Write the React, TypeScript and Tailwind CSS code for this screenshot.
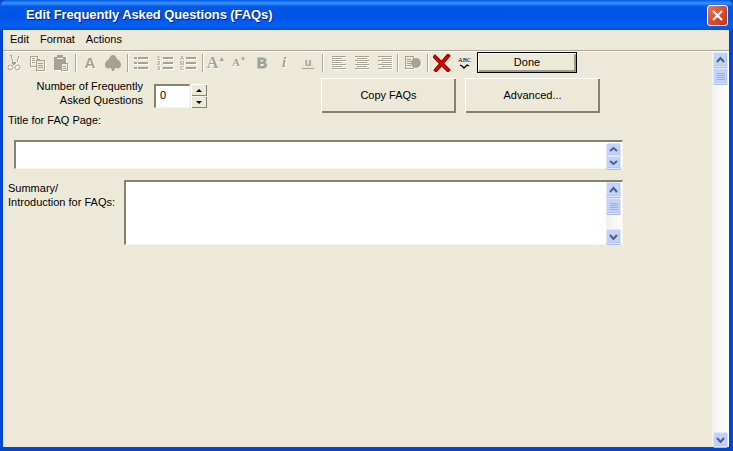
import type { ReactNode } from 'react';

const GREY = '#a5a294';

function Tool({ w, children }: { w: number; children: ReactNode }) {
  return (
    <div className="flex h-[20px] shrink-0 items-center justify-center" style={{ width: w }}>
      {children}
    </div>
  );
}

function Sep({ w = 8 }: { w?: number }) {
  return (
    <div className="flex h-[20px] shrink-0 justify-center" style={{ width: w }}>
      <div className="mt-px h-[18px] w-[2px] bg-[#aca899] border-r border-white" />
    </div>
  );
}

function Ico({ children, w = 16, h = 16 }: { children: ReactNode; w?: number; h?: number }) {
  return (
    <svg
      width={w}
      height={h}
      viewBox={`0 0 ${w} ${h}`}
      shapeRendering="crispEdges"
      className="[filter:drop-shadow(1px_1px_0_#ffffff)]"
      aria-hidden
    >
      {children}
    </svg>
  );
}

function Lines({ rows, x = 1, w = 13 }: { rows: number[]; x?: number; w?: number }) {
  return (
    <>
      {rows.map((y) => (
        <rect key={y} x={x} y={y} width={w} height={1} fill={GREY} />
      ))}
    </>
  );
}

function BulletList({ kind }: { kind: 'dot' | 'num' | 'alpha' }) {
  const labels = kind === 'num' ? ['1', '2', '3'] : ['A', 'B', 'C'];
  return (
    <Ico w={16} h={16}>
      {[2, 7, 12].map((y, i) =>
        kind === 'dot' ? (
          <g key={y}>
            <rect x={1} y={y} width={3} height={2} fill={GREY} />
            <rect x={5} y={y} width={10} height={2} fill={GREY} />
          </g>
        ) : (
          <g key={y}>
            <text x={0} y={y + 3} fontSize={6} fill={GREY} fontFamily="'Liberation Sans', sans-serif" fontWeight={700}>
              {labels[i]}
            </text>
            <rect x={6} y={y} width={10} height={2} fill={GREY} />
          </g>
        ),
      )}
    </Ico>
  );
}

function Glyph({ children, size, className }: { children: ReactNode; size: number; className?: string }) {
  return (
    <span
      className={`font-['Liberation_Serif',serif] font-bold leading-none text-[#a5a294] [text-shadow:1px_1px_0_#fff] ${className ?? ''}`}
      style={{ fontSize: size }}
    >
      {children}
    </span>
  );
}

function Toolbar() {
  return (
    <div className="flex items-center">
      <Tool w={22}>
        <Ico>
          <path d="M4 0v1h1v3h1v3h1v-3H6V0zM12 0v4h-1v3h1V4h1V1h-1V0z" fill={GREY} />
          <path d="M6 7h4v2H9v1H7V9H6z" fill={GREY} />
          <circle cx="4.5" cy="12.5" r="2.5" fill="none" stroke={GREY} shapeRendering="auto" />
          <circle cx="11.5" cy="12.5" r="2.5" fill="none" stroke={GREY} shapeRendering="auto" />
        </Ico>
      </Tool>
      <Tool w={24}>
        <Ico>
          <path d="M1 1h7v3h2v1H7v6H1z" fill="none" stroke={GREY} />
          <path d="M7 5h8v10H7z" fill="#ece9d8" stroke={GREY} />
          <Lines rows={[8, 10, 12]} x={9} w={5} />
          <Lines rows={[3, 5, 7]} x={3} w={3} />
        </Ico>
      </Tool>
      <Tool w={22}>
        <Ico>
          <path d="M2 2h3V0h6v2h3v10h-5v3H2z" fill={GREY} />
          <rect x={5} y={3} width={6} height={1} fill="#fff" />
          <path d="M9 8h6v7H9z" fill="#ece9d8" stroke={GREY} />
          <Lines rows={[11, 13]} x={11} w={3} />
        </Ico>
      </Tool>
      <Sep w={10} />
      <Tool w={18}>
        <span className="text-[15px] font-bold leading-none text-[#a5a294] [text-shadow:1px_1px_0_#fff]">A</span>
      </Tool>
      <Tool w={28}>
        <svg width="18" height="18" viewBox="0 0 18 18" aria-hidden>
          <path d="M9 1c2 0 3 2 4 4 2 1 4 3 4 6 0 3-3 4-5 3l-1 0-1 3H8l-1-3-1 0c-2 1-5 0-5-3 0-3 2-5 4-6 1-2 2-4 4-4z" fill={GREY} />
        </svg>
      </Tool>
      <Sep w={2} />
      <Tool w={24}><BulletList kind="dot" /></Tool>
      <Tool w={23}><BulletList kind="num" /></Tool>
      <Tool w={23}><BulletList kind="alpha" /></Tool>
      <Sep w={8} />
      <Tool w={18}>
        <Glyph size={16}>A</Glyph>
        <span className="-mt-2 text-[7px] leading-none text-[#a5a294]">▲</span>
      </Tool>
      <Tool w={28}>
        <Glyph size={11}>A</Glyph>
        <span className="-mt-2 text-[6px] leading-none text-[#a5a294]">▼</span>
      </Tool>
      <Tool w={18}>
        <span className="text-[14px] font-black leading-none text-[#a5a294] [-webkit-text-stroke:1px_#a5a294] [text-shadow:1px_1px_0_#fff]">B</span>
      </Tool>
      <Tool w={26}>
        <Glyph size={15} className="italic">i</Glyph>
      </Tool>
      <Tool w={22}>
        <span className="border-b border-[#a5a294] px-[3px] text-[11px] font-bold leading-[12px] text-[#a5a294]">u</span>
      </Tool>
      <Sep w={8} />
      <Tool w={23}>
        <Ico>
          {[1, 3, 5, 7, 9, 11, 13].map((y, i) => (
            <rect key={y} x={1} y={y} width={i % 2 ? 10 : 14} height={1} fill={GREY} />
          ))}
        </Ico>
      </Tool>
      <Tool w={23}>
        <Ico>
          {[1, 3, 5, 7, 9, 11, 13].map((y, i) => (
            <rect key={y} x={i % 2 ? 3 : 1} y={y} width={i % 2 ? 10 : 14} height={1} fill={GREY} />
          ))}
        </Ico>
      </Tool>
      <Tool w={23}>
        <Ico>
          {[1, 3, 5, 7, 9, 11, 13].map((y, i) => (
            <rect key={y} x={i % 2 ? 5 : 1} y={y} width={i % 2 ? 10 : 14} height={1} fill={GREY} />
          ))}
        </Ico>
      </Tool>
      <Sep w={4} />
      <Tool w={26}>
        <Ico w={18}>
          <path d="M1 1h8v12H1z" fill="#ece9d8" stroke={GREY} />
          <Lines rows={[4, 6, 8, 10]} x={3} w={4} />
          <circle cx="12" cy="8" r="5" fill={GREY} shapeRendering="auto" />
        </Ico>
      </Tool>
      <Sep w={4} />
      <Tool w={23}>
        <svg width="18" height="18" viewBox="0 0 18 18" aria-hidden>
          <path d="M2 3 15 16M15 2 3 16" stroke="#7a0000" strokeWidth="4" strokeLinecap="square" />
          <path d="M2 3 15 16M15 2 3 16" stroke="#e00000" strokeWidth="2.4" strokeLinecap="square" />
        </svg>
      </Tool>
      <Tool w={24}>
        <svg width="14" height="16" viewBox="0 0 14 16" aria-hidden>
          <text x="0" y="7" fontSize="6.5" fill="#000" fontFamily="'Liberation Serif', serif">ABC</text>
          <path d="M2 10l2 1 2 2 3-3 2 1" fill="none" stroke="#000" strokeWidth="1.3" />
        </svg>
      </Tool>
      <button className="flex h-[21px] w-[100px] shrink-0 items-center justify-center border border-black bg-[#ece9d8] text-[11px] text-black shadow-[inset_1px_1px_0_#fff,inset_-2px_-2px_0_#9d9a8a]">
        Done
      </button>
    </div>
  );
}

function WinButton({ children, className }: { children: ReactNode; className?: string }) {
  return (
    <button
      className={`flex h-[35px] w-[135px] items-center justify-center bg-[#ece9d8] text-[11px] text-black shadow-[inset_1px_1px_0_#fff,inset_-2px_-2px_0_#85826f] ${className ?? ''}`}
    >
      {children}
    </button>
  );
}

function Chevron({ dir, small }: { dir: 'up' | 'down'; small?: boolean }) {
  const pts = small
    ? dir === 'up'
      ? 'M1 5 4.5 2 8 5'
      : 'M1 2 4.5 5 8 2'
    : dir === 'up'
      ? 'M1 6 4.5 2 8 6'
      : 'M1 2 4.5 6 8 2';
  return (
    <svg width="9" height="8" viewBox="0 0 9 8" aria-hidden>
      <path d={pts} fill="none" stroke="#4d6185" strokeWidth="2" />
    </svg>
  );
}

function ScrollBtn({ dir, h = 15, small }: { dir: 'up' | 'down'; h?: number; small?: boolean }) {
  return (
    <div
      className="flex w-[15px] shrink-0 items-center justify-center rounded-[2px] border border-[#dfe8fd] bg-[#c1d2fb] shadow-[0_1px_0_#a9bde9,inset_-1px_-1px_0_#b4c7f3]"
      style={{ height: h }}
    >
      <Chevron dir={dir} small={small} />
    </div>
  );
}

function Thumb() {
  return (
    <div className="mt-px flex h-[16px] w-[15px] shrink-0 flex-col items-center justify-center gap-px rounded-[2px] border border-[#dfe8fd] bg-[#c1d2fb] shadow-[0_1px_0_#a9bde9,inset_-1px_-1px_0_#b4c7f3]">
      {[0, 1, 2, 3].map((i) => (
        <div key={i} className="h-px w-[8px] bg-[#8fb0f5]" />
      ))}
    </div>
  );
}

function Sunken({ className, children }: { className?: string; children?: ReactNode }) {
  return (
    <div
      className={`border-t-2 border-l-2 border-r border-b border-t-[#85826f] border-l-[#85826f] border-r-[#f6f5ee] border-b-[#f6f5ee] bg-white ${className ?? ''}`}
    >
      {children}
    </div>
  );
}

function SpinBtn({ dir }: { dir: 'up' | 'down' }) {
  return (
    <div className="flex h-[12px] w-[16px] items-center justify-center bg-[#ece9d8] shadow-[inset_1px_1px_0_#fff,inset_-1px_-1px_0_#85826f]">
      <span
        className={
          dir === 'up'
            ? 'h-0 w-0 border-x-[3px] border-b-[3px] border-x-transparent border-b-black'
            : 'h-0 w-0 border-x-[3px] border-t-[3px] border-x-transparent border-t-black'
        }
      />
    </div>
  );
}

export default function App() {
  return (
    <div className="flex h-[451px] w-[733px] flex-col overflow-hidden bg-[#0046d5] font-['Liberation_Sans',Arial,sans-serif] text-[11px] text-black">
      <div className="flex h-[30px] shrink-0 items-center justify-between rounded-t-[7px] bg-[linear-gradient(180deg,#0058ee_0%,#3a93ff_10%,#0058e6_22%,#0054e3_55%,#0060f5_85%,#0050d8_100%)] pl-[26px] pr-[5px]">
        <span className="text-[13px] font-bold tracking-[-0.1px] text-white [text-shadow:1px_1px_0_#0f1e8a]">
          Edit Frequently Asked Questions (FAQs)
        </span>
        <div className="flex h-[21px] w-[21px] items-center justify-center rounded-[3px] border border-white bg-[linear-gradient(135deg,#e8795a,#d2492a_60%,#c0381c)]">
          <svg width="13" height="13" viewBox="0 0 13 13" aria-hidden>
            <path d="M2 2 11 11M11 2 2 11" stroke="#fff" strokeWidth="2.2" />
          </svg>
        </div>
      </div>

      <div className="flex min-h-0 flex-1 pl-[3px] pr-[4px] pb-[4px]">
        <div className="flex min-w-0 flex-1 flex-col bg-[#ece9d8]">
          <div className="flex h-[20px] shrink-0 items-center gap-[11px] pb-[2px] pl-[7px] text-[11px]">
            <span>Edit</span>
            <span>Format</span>
            <span>Actions</span>
          </div>
          <div className="h-[2px] shrink-0 border-t border-[#aca899] bg-white" />
          <div className="flex min-h-0 flex-1">
            <div className="min-w-0 flex-1">
              <Toolbar />

              <div className="mt-[5px] flex h-[35px] items-start">
                <div className="mt-[1px] w-[140px] text-right leading-[14px]">
                  Number of Frequently
                  <br />
                  Asked Questions
                </div>
                <Sunken className="ml-[11px] mt-[6px] h-[24px] w-[36px] pl-[4px] pt-[3px] leading-[13px]">0</Sunken>
                <div className="ml-px mt-[6px] flex flex-col">
                  <SpinBtn dir="up" />
                  <SpinBtn dir="down" />
                </div>
                <WinButton className="ml-[114px]">Copy FAQs</WinButton>
                <WinButton className="ml-[9px]">Advanced...</WinButton>
              </div>

              <div className="pl-[5px] leading-[14px]">Title for FAQ Page:</div>

              <Sunken className="ml-[11px] mt-[13px] flex h-[29px] w-[609px] flex-col items-end justify-start">
                <div className="flex flex-col pt-px pr-px">
                  <ScrollBtn dir="up" h={13} small />
                  <ScrollBtn dir="down" h={13} small />
                </div>
              </Sunken>

              <div className="mt-[11px] flex items-start">
                <div className="w-[121px] pl-[5px] pt-[1px] leading-[14px]">
                  Summary/
                  <br />
                  Introduction for FAQs:
                </div>
                <Sunken className="flex h-[65px] w-[499px] justify-end">
                  <div className="flex h-full flex-col bg-[linear-gradient(90deg,#f3f1ec,#fdfdfa)] pr-px">
                    <ScrollBtn dir="up" />
                    <Thumb />
                    <div className="flex-1" />
                    <ScrollBtn dir="down" />
                  </div>
                </Sunken>
              </div>
            </div>

            <div className="flex h-full w-[17px] shrink-0 flex-col bg-[linear-gradient(90deg,#f3f1ec,#fefefb)] pl-px">
              <ScrollBtn dir="up" />
              <Thumb />
              <div className="flex-1" />
              <ScrollBtn dir="down" />
            </div>
          </div>
        </div>
      </div>
    </div>
  );
}
